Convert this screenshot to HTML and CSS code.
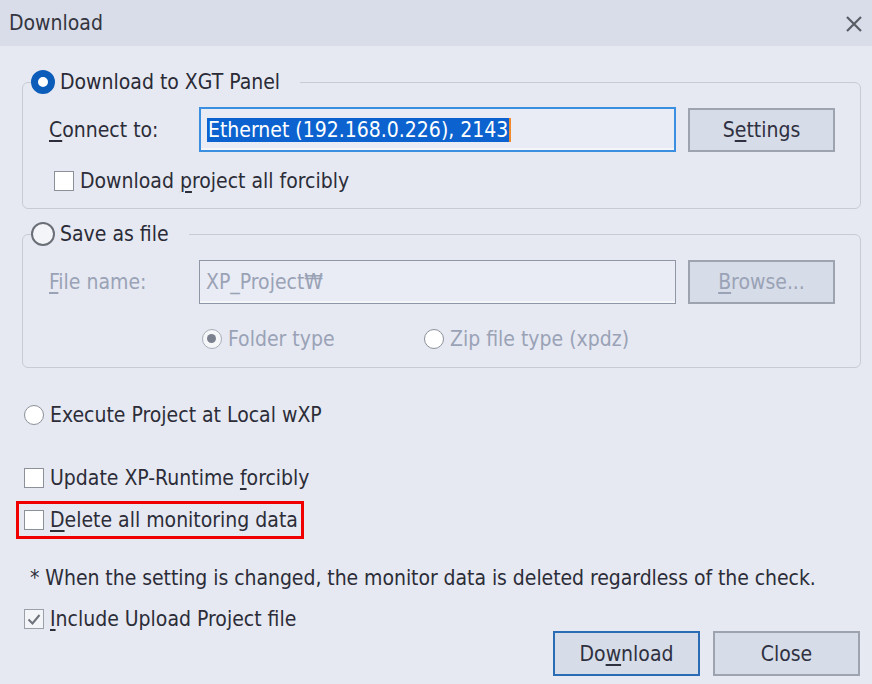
FILE: index.html
```html
<!DOCTYPE html>
<html>
<head>
<meta charset="utf-8">
<title>Download</title>
<link rel="stylesheet" href="styles.css">
</head>
<body>
<div class="dialog">
  <div class="titlebar">
    <span class="title">Download</span>
    <svg class="close" width="18" height="18" viewBox="0 0 18 18"><path d="M2 2 L16 16 M16 2 L2 16" stroke="#5a5d66" stroke-width="2.2" fill="none"/></svg>
  </div>
  <div class="content">
    <fieldset class="group g1">
      <legend class="legend"><span class="radio big on"></span><span class="legend-text">Download to XGT Panel</span></legend>
      <div class="field-row">
        <span class="lbl"><u>C</u>onnect to:</span>
        <div class="input active"><span class="sel">Ethernet (192.168.0.226), 2143</span><span class="caret"></span></div>
        <div class="btn">S<u>e</u>ttings</div>
      </div>
      <div class="check-row in-group"><span class="box"></span><span>Download <u>p</u>roject all forcibly</span></div>
    </fieldset>

    <fieldset class="group g2">
      <legend class="legend"><span class="radio big"></span><span class="legend-text">Save as file</span></legend>
      <div class="field-row">
        <span class="lbl dis"><u>F</u>ile name:</span>
        <div class="input dis-input"><span class="dis">XP_Project₩</span></div>
        <div class="btn dis"><u>B</u>rowse...</div>
      </div>
      <div class="type-row">
        <div class="opt folder"><span class="radio small dis-on"></span><span class="dis">Folder type</span></div>
        <div class="opt"><span class="radio small"></span><span class="dis">Zip file type (xpdz)</span></div>
      </div>
    </fieldset>

    <div class="opt exec"><span class="radio small"></span><span>Execute Project at Local wXP</span></div>

    <div class="check-row update"><span class="box"></span><span>Update XP-Runtime <u>f</u>orcibly</span></div>
    <div class="check-row delete marked"><span class="box"></span><span><u>D</u>elete all monitoring data</span></div>

    <div class="note">* When the setting is changed, the monitor data is deleted regardless of the check.</div>

    <div class="check-row include"><span class="box checked"><svg width="16" height="16" viewBox="0 0 16 16"><path d="M2.5 8.5 L6.5 12.5 L13.5 4" stroke="#6e727b" stroke-width="2" fill="none"/></svg></span><span><u>I</u>nclude Upload Project file</span></div>

    <div class="actions">
      <div class="btn primary">Do<u>w</u>nload</div>
      <div class="btn">Close</div>
    </div>
  </div>
</div>
</body>
</html>
```

FILE: styles.css
```css
*, *::before, *::after { box-sizing: border-box; }
html, body { margin: 0; padding: 0; }
body {
  width: 872px;
  height: 684px;
  overflow: hidden;
  background: #e6e9f2;
  font-family: "DejaVu Sans Condensed", "DejaVu Sans", sans-serif;
  font-size: 21px;
  color: #2c2d38;
}
.dialog { width: 872px; height: 684px; background: #e6e9f2; }
u { text-decoration: underline; text-underline-offset: 3px; text-decoration-thickness: 1.5px; }

.titlebar {
  height: 46px;
  background: #d8dde9;
  display: flex;
  align-items: center;
  justify-content: space-between;
  padding: 0 9px 0 9px;
}
.title { font-size: 21px; color: #343540; }
.close { margin-top: 2px; }

.content { padding: 0 11px 0 22px; }

.group {
  margin: 0;
  border: 1.5px solid #c7cbd4;
  border-radius: 6px;
  padding: 0 24px 14px 8px;
  min-width: 0;
}
.g1 { margin-top: 23px; padding-bottom: 15px; }
.g2 { margin-top: 12px; padding-bottom: 15px; }

.legend {
  display: flex;
  align-items: center;
  height: 26px;
  padding: 0 20px 0 0;
  margin: 0;
  line-height: 26px;
}
.legend-text { margin-left: 5px; color: #2a2b36; }

.radio {
  display: inline-block;
  border-radius: 50%;
  flex: none;
  position: relative;
}
.radio.big {
  width: 24px; height: 24px;
  background: #f4f5f8;
  border: 2px solid #6b6f78;
}
.radio.big.on {
  background: #ffffff;
  border: 7px solid #0b5db9;
}
.radio.small {
  width: 20px; height: 20px;
  background: #ffffff;
  border: 1.5px solid #8b9099;
}
.radio.small.dis-on {
  background: #f6f7f9;
  border-color: #a8adb7;
}
.radio.small.dis-on::after {
  content: "";
  position: absolute;
  left: 4px; top: 4px;
  width: 9px; height: 9px;
  border-radius: 50%;
  background: #7c8190;
}

.field-row {
  display: grid;
  grid-template-columns: 150px 477px 159px;
  column-gap: 0;
  align-items: center;
  padding-left: 18px;
}
.field-row .btn { margin-left: 12px; }
.g1 .field-row { margin-top: 12px; }
.g2 .field-row { margin-top: 13px; }

.lbl { line-height: 26px; }
.input {
  height: 45px;
  border: 1.5px solid #8f96a5;
  background: #e9ecf4;
  box-shadow: inset 0 -2px 0 #f5f6fa;
  display: flex;
  align-items: center;
  padding-left: 6px;
  white-space: nowrap;
  overflow: hidden;
}
.input.active { border: 2px solid #3b8fe0; }
.g2 .input { height: 44px; }
.sel {
  background: #0c63cf;
  color: #ffffff;
  line-height: 24px;
  padding: 0 1px;
}
.caret {
  display: inline-block;
  width: 2px;
  height: 24px;
  background: #f08a2c;
}

.btn {
  height: 45px;
  background: #d6dce8;
  border: 2px solid #9da3af;
  display: flex;
  align-items: center;
  justify-content: center;
  color: #2f3040;
}
.g1 .btn { height: 44px; }
.g2 .btn { height: 44px; }
.btn.dis { color: #9aa2b6; }
.dis { color: #9aa2b6; }

.type-row {
  display: flex;
  padding-left: 171px;
  margin-top: 22px;
  line-height: 26px;
}
.opt { display: flex; align-items: center; gap: 6px; line-height: 26px; }
.opt.folder { width: 222px; }

.exec { margin-top: 34px; margin-left: 2px; }

.check-row {
  display: flex;
  align-items: center;
  gap: 6px;
  line-height: 24px;
  height: 24px;
  margin-left: 2px;
}
.check-row.in-group { margin-top: 17px; margin-left: 23px; }
.box {
  width: 20px; height: 20px;
  background: #ffffff;
  border: 1.5px solid #8b9099;
  flex: none;
  display: flex;
  align-items: center;
  justify-content: center;
}
.box.checked { background: #f4f5f8; border-color: #9a9fa8; }

.update { margin-top: 38px; }
.delete { margin-top: 18px; position: relative; }
.marked::after {
  content: "";
  position: absolute;
  left: -8px;
  top: -7px;
  width: 288px;
  height: 38px;
  border: 3px solid #f00000;
}

.note { margin-top: 34px; margin-left: 8px; line-height: 24px; height: 24px; white-space: nowrap; letter-spacing: -0.05px; }
.include { margin-top: 17px; }

.actions {
  display: flex;
  justify-content: flex-end;
  gap: 13px;
  margin-right: 1px;
}
.actions .btn { width: 147px; height: 45px; }
.btn.primary { border-color: #2a6db5; }
```
